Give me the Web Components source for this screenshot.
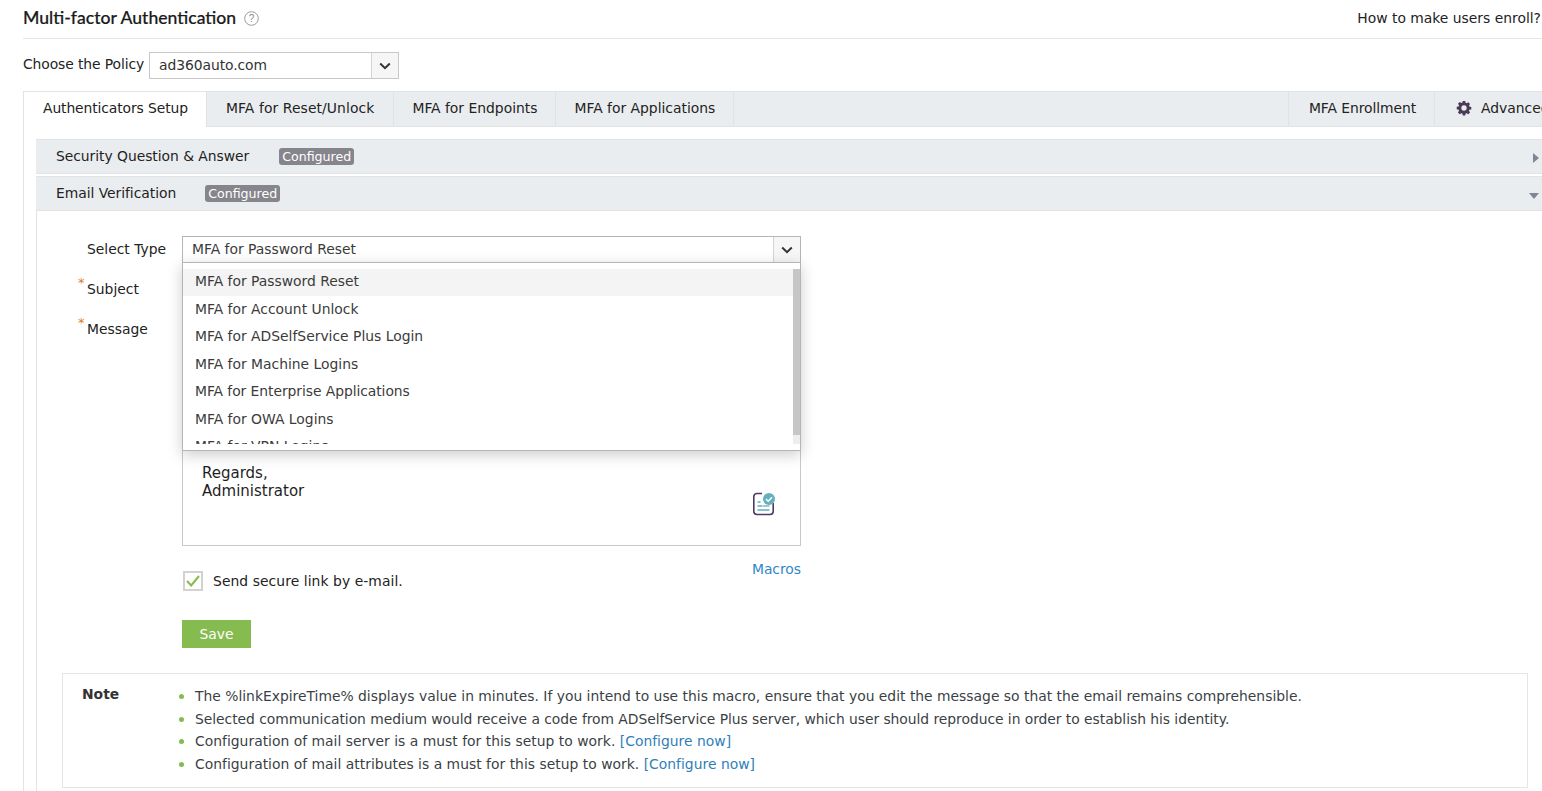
<!DOCTYPE html>
<html><head><meta charset="utf-8"><title>MFA</title>
<style>
html,body{margin:0;padding:0;height:791px;overflow:hidden;background:#fff}
body{font:13.88px/18px "DejaVu Sans",sans-serif;color:#222}
</style></head><body>
<mfa-page></mfa-page>
<script>
function def(name, html){
  customElements.define(name, class extends HTMLElement{
    constructor(){super();this.attachShadow({mode:'open'}).innerHTML=html;}
  });
}
const FONT='"DejaVu Sans","Liberation Sans",sans-serif';
def('mfa-chevron',`<style>:host{display:flex;align-items:center;justify-content:center;width:26px;flex:none;border-left:1px solid #d4d4d4;background:#f6f6f6}svg{display:block}</style>
<svg width="12" height="8" viewBox="0 0 12 8"><path d="M1.2 1.5 6 6.2 10.8 1.5" fill="none" stroke="#333" stroke-width="2"/></svg>`);
def('mfa-header',`<style>:host{display:flex;align-items:flex-start;justify-content:space-between;height:38px;width:1519px;border-bottom:1px solid #e6e6e6}
h1{margin:0;padding-top:7px;font:500 17.6px/22px Lato,sans-serif;color:#1b1b1b;display:flex;align-items:center;gap:8px;-webkit-text-stroke:.2px #1b1b1b}
svg{display:block;margin-top:0}
.r{padding-top:9px;line-height:18px;padding-right:1px;color:#222}
</style><h1>Multi-factor Authentication<svg width="15" height="15" viewBox="0 0 15 15"><circle cx="7.5" cy="7.5" r="6.8" fill="none" stroke="#9a9a9a"/><text x="7.5" y="11" text-anchor="middle" font-size="10" font-family="Liberation Sans" fill="#8a8a8a">?</text></svg></h1><div class="r">How to make users enroll?</div>`);
def('mfa-policy',`<style>:host{display:flex;align-items:center;gap:5px;margin-top:13px;height:27px}
.s{box-sizing:border-box;width:250px;height:27px;border:1px solid #c8c8c8;display:flex}
.v{flex:1;padding-left:9px;line-height:25px;color:#333;letter-spacing:-.07px}
span{position:relative;top:-2px;letter-spacing:-.1px}
</style><span>Choose the Policy</span><div class="s"><div class="v">ad360auto.com</div><mfa-chevron></mfa-chevron></div>`);
def('mfa-tab',`<style>:host{display:flex;align-items:center;gap:9px;box-sizing:border-box;height:34px;padding:0 18px 2px 19px;background:#eaedef;border-right:1px solid #e0e3e5;white-space:nowrap;flex:none;color:#222}
:host([active]){background:#fff;height:35px;padding:0 18px 3px 19px;border-left:1px solid #e3e3e3}
:host([end]){border-left:1px solid #e0e3e5;padding-left:20px}
:host([plain]){border-right:0;width:130px;padding-right:0;padding-left:21px;overflow:hidden}</style><slot></slot>`);
def('mfa-tabs',`<style>:host{display:flex;box-sizing:border-box;height:36px;background:linear-gradient(#e3e3e3,#e3e3e3) bottom/100% 1px no-repeat #eaedef;border-top:1px solid #e3e3e3;align-items:flex-start;overflow:hidden}
.l,.r{display:flex;flex:none}.sp{flex:1}</style><div class="l"><slot name="l"></slot></div><div class="sp"></div><div class="r"><slot name="r"></slot></div>`);
def('mfa-acc',`<style>:host{display:flex;align-items:center;box-sizing:border-box;height:35px;background:#eaedef;border-top:1px solid #e3e3e3;border-bottom:1px solid #e3e3e3;padding:0 2px 2px 20px;margin-bottom:2px;color:#222}
.t{flex:none;letter-spacing:-.04px}.b{margin-left:var(--bm,30px);background:#87858c;color:#fff;font-size:12.6px;line-height:17px;padding:0 3px;border-radius:3px;position:relative;top:1px}
.sp{flex:1}svg{display:block}
</style><span class="t"><slot></slot></span><span class="b"><slot name="badge">Configured</slot></span><span class="sp"></span><slot name="arrow"></slot>`);
def('mfa-row',`<style>:host{display:grid;grid-template-columns:145px 619px;align-items:start}
.l{padding:4px 0 0 50px;position:relative}
:host([req]) .l::before{content:"*";position:absolute;left:41px;top:-2px;color:#d9802e;font-size:13px}
</style><div class="l"><slot name="label"></slot></div><div class="c"><slot></slot></div>`);
def('mfa-dropdown',`<style>:host{position:absolute;left:0;right:0;top:26px;height:189px;box-sizing:border-box;display:block;background:#fff;border:1px solid #b5b5b5;box-shadow:0 4px 14px rgba(0,0,0,.2);overflow:hidden;z-index:2;padding-top:6px}
ul{list-style:none;margin:0;padding:0;color:#3b3b3b}
li{height:27.5px;line-height:24.5px;padding-left:12px;white-space:nowrap}
li.on{background:#f4f4f4;margin-right:7px;height:27px;margin-bottom:.5px}
.bar{position:absolute;right:0;top:6px;width:7px;height:166px;background:#c6c6c6}
.tr{position:absolute;right:0;top:172px;width:7px;height:9px;background:#eee}
.fade{position:absolute;left:0;right:0;bottom:0;height:6px;background:#fff}
</style><ul><li class="on">MFA for Password Reset</li><li>MFA for Account Unlock</li><li>MFA for ADSelfService Plus Login</li><li>MFA for Machine Logins</li><li style="letter-spacing:-.06px">MFA for Enterprise Applications</li><li>MFA for OWA Logins</li><li>MFA for VPN Logins</li></ul><div class="fade"></div><div class="bar"></div><div class="tr"></div>`);
def('mfa-select',`<style>:host{display:block;position:relative}
.s{box-sizing:border-box;height:27px;border:1px solid #b5b5b5;display:flex;background:#fff}
.v{flex:1;padding-left:9px;line-height:25px;color:#3b3b3b}
</style><div class="s"><div class="v"><slot></slot></div><mfa-chevron></mfa-chevron></div><mfa-dropdown></mfa-dropdown>`);
def('mfa-textbox',`<style>:host{display:block;box-sizing:border-box;border:1px solid #c9c9c9;background:#fff;position:relative}
:host([big]){height:230px;padding:147px 19px 0;font-size:15px;line-height:18px;color:#1f1f1f}
:host([small]){height:27px}
</style><slot></slot>`);
def('mfa-note-item',`<style>:host{display:block;height:22.5px;line-height:22.5px;position:relative;white-space:nowrap}
:host::before{content:"";position:absolute;left:-16px;top:9px;width:5px;height:5px;border-radius:50%;background:#85bb4f}
</style><slot></slot>`);
def('mfa-note',`<style>:host{display:flex;box-sizing:border-box;height:115px;border:1px solid #e6e6e6;margin:25px 14px 0 25px;padding:11px 0 0 19px;color:#3a3f45}
b{width:113px;flex:none;color:#333;font-weight:700;line-height:18px}
.u{display:block}
</style><b>Note</b><div class="u"><slot></slot></div>`);
def('mfa-page',`<style>:host{display:block;width:1542px;height:791px;box-sizing:border-box;padding-left:23px;overflow:hidden;position:relative}
.wrap{width:1580px}
.tabs{width:1542px;margin-top:12px}
.body{box-sizing:border-box;width:1519px;padding:12px 0 0 12px;border-left:1px solid #e3e3e3;height:700px;}
.panel{border-left:1px solid #e3e3e3;margin-top:-2px;padding-top:25px;height:600px;box-sizing:border-box}
.f{display:flex;flex-direction:column}
.r1{height:40px}.r2{height:40px}
.ck{display:flex;align-items:center;margin-top:25px;margin-left:1px;width:618px;position:relative;height:20px}
.box{box-sizing:border-box;width:20px;height:20px;border:2px solid #d2d2d2;background:#fff;display:flex;align-items:center;justify-content:center;flex:none;margin-right:10px}
.send{letter-spacing:.07px}
.m{position:absolute;right:0;top:-12px;color:#2f86c9;line-height:20px;letter-spacing:-.03px}
.save{display:block;box-sizing:border-box;width:69px;height:28px;margin-top:29px;background:#85bb4f;color:#fff;border:0;font:13.88px/28px ${FONT};text-align:center;padding:0}
a{color:#2f7eb8;text-decoration:none}
</style>
<div class="wrap">
<mfa-header></mfa-header>
<mfa-policy></mfa-policy>
<mfa-tabs class="tabs">
  <mfa-tab slot="l" active style="letter-spacing:-.1px">Authenticators Setup</mfa-tab>
  <mfa-tab slot="l" style="letter-spacing:.1px;padding-right:19px">MFA for Reset/Unlock</mfa-tab>
  <mfa-tab slot="l" style="padding-left:18px">MFA for Endpoints</mfa-tab>
  <mfa-tab slot="l" style="padding-left:18px">MFA for Applications</mfa-tab>
  <mfa-tab slot="r" end style="letter-spacing:-.07px">MFA Enrollment</mfa-tab>
  <mfa-tab slot="r" plain><svg width="16" height="16" viewBox="-1 -1 18 18" style="flex:none"><path fill="#4b3b57" fill-rule="evenodd" d="M6.6 0h2.8l.4 2.1 1.2.5 1.8-1.2 2 2-1.2 1.8.5 1.2 2.1.4v2.8l-2.1.4-.5 1.2 1.2 1.8-2 2-1.8-1.2-1.2.5-.4 2.1H6.6l-.4-2.1-1.2-.5-1.8 1.2-2-2 1.2-1.8-.5-1.2L-.2 9.4V6.6l2.1-.4.5-1.2-1.2-1.8 2-2 1.8 1.2 1.2-.5zM8 5a3 3 0 1 0 0 6 3 3 0 0 0 0-6z"/></svg>Advanced</mfa-tab>
</mfa-tabs>
<div class="body">
  <mfa-acc>Security Question &amp; Answer<svg slot="arrow" width="8" height="10" viewBox="0 0 8 10" style="position:relative;top:2px"><path d="M1 0l6 5-6 5z" fill="#7d8794"/></svg></mfa-acc>
  <mfa-acc style="--bm:29px">Email Verification<svg slot="arrow" width="10" height="6" viewBox="0 0 10 6" style="position:relative;top:3px;margin-right:1px"><path d="M0 0h10L5 6z" fill="#7d8794"/></svg></mfa-acc>
  <div class="panel">
   <div class="f">
    <mfa-row class="r1"><span slot="label">Select Type</span><mfa-select>MFA for Password Reset</mfa-select></mfa-row>
    <mfa-row class="r2" req><span slot="label">Subject</span><mfa-textbox small></mfa-textbox></mfa-row>
    <mfa-row req><span slot="label">Message</span><mfa-textbox big>Regards,<br>Administrator<svg style="position:absolute;right:24px;bottom:28px" width="24" height="26" viewBox="0 0 24 26"><path d="M10 2.5H5a3.2 3.2 0 0 0-3.2 3.2v14.6A3.2 3.2 0 0 0 5 23.5h13a3.2 3.2 0 0 0 3.2-3.2V12" fill="#fff" stroke="#4b3b66" stroke-width="1.6"/><path d="M5.500 11h3M5.500 15h5M5.500 19h12" stroke="#5fb0c4" stroke-width="1.300"/><path d="M11 15h6.500" stroke="#8aa0a8" stroke-width="1.300"/><circle cx="17" cy="8" r="6" fill="#62b1bd"/><path d="M14 8l2.200 2.200 3.800-4" fill="none" stroke="#fff" stroke-width="1.600"/></svg></mfa-textbox></mfa-row>
    <mfa-row><span slot="label"></span><div class="ck"><span class="box"><svg width="14" height="12" viewBox="0 0 14 12"><path d="M1 6l4.200 4.500L13 1" fill="none" stroke="#85bb4f" stroke-width="2"/></svg></span><span class="send">Send secure link by e-mail.</span><a class="m" style="color:#2f86c9">Macros</a></div><button class="save">Save</button></mfa-row>
   </div>
   <mfa-note>
     <mfa-note-item>The %linkExpireTime% displays value in minutes. If you intend to use this macro, ensure that you edit the message so that the email remains comprehensible.</mfa-note-item>
     <mfa-note-item style="letter-spacing:-.047px">Selected communication medium would receive a code from ADSelfService Plus server, which user should reproduce in order to establish his identity.</mfa-note-item>
     <mfa-note-item style="letter-spacing:.016px">Configuration of mail server is a must for this setup to work. <a style="color:#2f7eb8">[Configure now]</a></mfa-note-item>
     <mfa-note-item style="letter-spacing:.016px">Configuration of mail attributes is a must for this setup to work. <a style="color:#2f7eb8">[Configure now]</a></mfa-note-item>
   </mfa-note>
  </div>
</div>
</div>`);
</script>
</body></html>
